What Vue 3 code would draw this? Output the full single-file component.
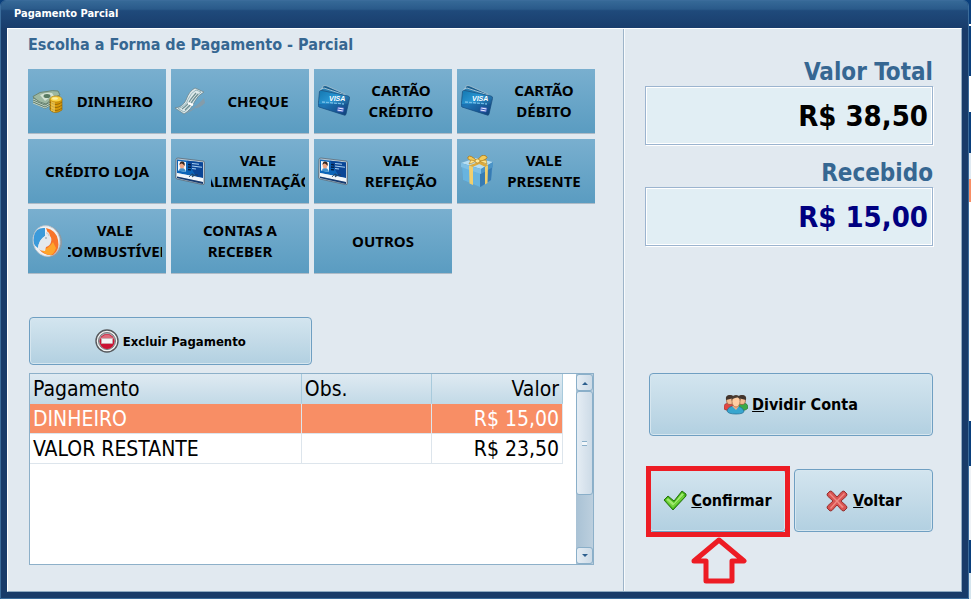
<template>
  <div class="screen">
    <main class="window">
      <header class="title-bar">Pagamento Parcial</header>

      <div class="body">
        <section class="methods">
          <h1 class="heading">Escolha a Forma de Pagamento - Parcial</h1>

          <div class="tiles">
            <button v-for="tile in tiles" :key="tile.lines.join(' ')" type="button" class="tile">
              <svg v-if="tile.icon === 'money'" class="tile-icon" viewBox="0 0 32 32">
                <path d="M1 12v6l12 6 14-8v-6z" fill="#5d7d6b" />
                <path d="M1 14l12 5 14-8M1 16l12 5 14-8M1 18l12 5 14-8" fill="none" stroke="#c3d3c6" />
                <path d="M1 11.500Q8 6 15 6.500 20 5 26 6l2 4q-7 2-14 9Q7 18 1 12z" fill="#9db8a2" stroke="#6b8574" />
                <path d="M8 10q6-3 12-2l2 3q-5 1-9 5z" fill="#d4e2d3" />
                <ellipse cx="15" cy="11" rx="3.500" ry="2" fill="#587a61" />
                <path d="M18 14v11q5 5 12 0V14z" fill="#d99a08" stroke="#9a6a06" stroke-width=".7" />
                <path d="M18 17q6 5 12 0M18 20q6 5 12 0M18 23q6 5 12 0" fill="none" stroke="#9a6a06" />
                <path d="M20 16v10M22 17v10" stroke="#ffe98a" stroke-width="1.200" opacity=".8" />
                <ellipse cx="24" cy="14" rx="6" ry="3" fill="#fbd445" stroke="#b98009" stroke-width=".7" />
                <ellipse cx="23" cy="13.500" rx="3" ry="1.300" fill="#fff0a0" />
              </svg>
              <svg v-else-if="tile.icon === 'check'" class="tile-icon" viewBox="0 0 32 32">
                <path d="M12 27q8-4 17-14l1 5q-6 6-10 5-4 4-8 5z" fill="#8b9aa3" opacity=".8" />
                <path d="M0 23q8-1 11-8Q14 6 20 3l9 4q-6 3-9 9-4 9-11 13z" fill="#dfeaeb" stroke="#6d878e" stroke-width=".8" />
                <path d="M3 23.500q8-2 10-9 3-7 8-9.500l5 2q-5 3-8 9-4 8-9 11z" fill="none" stroke="#789fa8" stroke-width=".7" />
                <path d="M7 24q6-4 9-10l5-6M10 25q5-4 8-10l5-6" fill="none" stroke="#6f8f92" stroke-width="1.200" />
                <path d="M13 18l5 2" stroke="#fff" stroke-width="2" />
              </svg>
              <svg v-else-if="tile.icon === 'card'" class="tile-icon" viewBox="0 0 32 32">
                <path d="M5 1q2-1 4 0l18 8-3 8L2 9z" fill="#1a5f8f" stroke="#aac4d2" stroke-width=".8" />
                <path d="M3 4l3-1 21 7-2 8L1 16z" fill="#2c82b4" stroke="#bdd2dd" stroke-width=".8" />
                <path d="M1.500 6.500Q2 5 4 5.500L30 11q2 .5 1.500 2.500L28 29q-.5 2-2 1L1 22q-1-.5-.8-2z" fill="url(#card-face)" stroke="#1a4d7c" stroke-width=".7" />
                <path d="M0 19q14-1 30 0l-2 10-2 1L1 22z" fill="#0f4c8e" opacity=".45" />
                <path d="M4 17l22 2" stroke="#73bde7" stroke-width="1.300" stroke-dasharray="3 1" />
                <text x="11" y="16" class="brand">VISA</text>
                <path d="M20 22l6 1-1 4-6-1z" fill="#e4ebff" stroke="#3450b5" stroke-width=".7" />
                <path d="M20 24l5 1" stroke="#3450b5" />
                <defs>
                  <linearGradient id="card-face" x1="0" y1="0" x2="1" y2="1">
                    <stop offset="0" stop-color="#1376ae" />
                    <stop offset=".4" stop-color="#2a96d3" />
                    <stop offset="1" stop-color="#123063" />
                  </linearGradient>
                </defs>
              </svg>
              <svg v-else-if="tile.icon === 'badge'" class="tile-icon" viewBox="0 0 32 32">
                <path d="M1 4.500Q1 3 3 3l25 3q1.500 0 1.500 2v20q0 2-2 1.600L2 24q-1.500-.5-1.500-2z" fill="#b8c7d2" stroke="#5c6b78" stroke-width=".8" />
                <path d="M2 4.500l26 3V23L2 18z" fill="#0c64b8" />
                <path d="M12 5.700l16 1.800V23l-7-1.500z" fill="#0a4596" />
                <path d="M2 18l26 5v4L2 21.500z" fill="#f2f6fa" />
                <path d="M2 21.500L28 27v2L2 23z" fill="#153a70" />
                <path d="M3 6l8 1v10l-8-1.500z" fill="#f3f7fb" />
                <path d="M4 16q0-3 3-3t4 4z" fill="#3d8fcc" />
                <ellipse cx="7" cy="10.500" rx="2.300" ry="3" fill="#efa684" />
                <path d="M4.500 10q0-4 3-3.500T9.500 11q-1-2-2.500-2.500T4.500 10z" fill="#33231d" />
                <path d="M13 9.500l3 .3M13 12l3 .3M13 14.500l3 .3" stroke="#061c3f" stroke-width="1.300" />
                <path d="M17 8.500l7 .8M17 11l10 1.200M17 13.500l4 .5" stroke="#a9d0f1" stroke-width="1.100" />
                <path d="M14 22q3-4 4-3t-1 3q3-3 6-2" fill="none" stroke="#26394c" stroke-width=".8" />
              </svg>
              <svg v-else-if="tile.icon === 'gift'" class="tile-icon" viewBox="0 0 32 32">
                <path d="M1 9l15-6 16 4-2 18-10 7L2 25z" fill="#4f93c6" />
                <path d="M1 12l18 5v15L2 25z" fill="#68b4df" />
                <path d="M19 17l12-6-1 14-11 7z" fill="#377bb3" />
                <path d="M0 8l15-5 17 4-12 7z" fill="#b6def2" />
                <path d="M0 8l20 6v5L0 12z" fill="#7fc0e5" />
                <path d="M20 14l12-7v5l-12 7z" fill="#4c94c7" />
                <path d="M8 10.500l4 1.200V30l-3.500-1.500zM24 11.700l3-1.700-.5 18-2.500 1.500z" fill="#f1cf6d" />
                <path d="M8 10.500L23 5l3 .7-14 6zM10 5l3-1 14 6-3 1.700z" fill="#dfaa3b" />
                <path d="M16 6Q9-1 7 2t9 5zM16 6q5-8 9-5t-8 6z" fill="#f3cb5a" stroke="#a87518" stroke-width=".8" />
                <path d="M15 6Q10 9 8 9l2-4zM18 6l8 3-1-4z" fill="#ffe48c" stroke="#b4831d" stroke-width=".6" />
                <ellipse cx="16.500" cy="6" rx="2.500" ry="2" fill="#ffe99c" stroke="#a87518" stroke-width=".6" />
              </svg>
              <svg v-else-if="tile.icon === 'fuel'" class="tile-icon" viewBox="0 0 32 32">
                <ellipse cx="16.500" cy="16.500" rx="13.500" ry="15.500" transform="rotate(-12 16.500 16.500)" fill="#8d9aa3" />
                <ellipse cx="14.500" cy="16" rx="13.500" ry="15.500" transform="rotate(-12 14.500 16)" fill="#eef2f5" stroke="#b9c2c9" stroke-width=".8" />
                <path d="M13 3Q4 2 2 11t4 12Q7 15 13 11z" fill="#3b9ada" />
                <path d="M14 3q10 2 12 12t-5 15q-9 1-14-6 10-3 11-10z" fill="#f8742a" />
                <path d="M9 25q8-1 12-8l3 6q-2 6-5 7-6 0-10-5z" fill="#ffa52b" />
                <path d="M6 24q0-9 7-13l1-4q3-1 4 4 2 2 1 6-1 4-5 5l-1 4q-4 0-7-2z" fill="#e4e9ee" />
                <path d="M14 8q2-1 3 3" fill="none" stroke="#c3ccd4" />
                <circle cx="14" cy="13" r="1" fill="#a5b2bd" />
              </svg>
              <span class="tile-text">
                <span v-for="line in tile.lines" :key="line">{{ line }}</span>
              </span>
            </button>
          </div>

          <div class="payments">
            <button type="button" class="action delete">
              <svg class="action-icon" viewBox="0 0 24 24">
                <circle cx="12" cy="12" r="11" fill="#f4f4f4" stroke="#55585c" stroke-width="1.400" />
                <circle cx="12" cy="12" r="8.500" fill="#a9adb2" stroke="#77797c" />
                <circle cx="12" cy="12.500" r="7.500" fill="#cb1231" />
                <path d="M5 10q7-9 14 0-7 2-14 0z" fill="#dd6b7a" />
                <rect x="6.500" y="9.500" width="11" height="5" fill="#f5f5f5" stroke="#bdb4b5" stroke-width=".6" />
              </svg>
              <span>Excluir Pagamento</span>
            </button>

            <div class="grid-box">
              <div class="grid-area">
                <table class="grid">
                  <thead>
                    <tr>
                      <th scope="col" class="col-name">Pagamento</th>
                      <th scope="col">Obs.</th>
                      <th scope="col" class="col-value">Valor</th>
                    </tr>
                  </thead>
                  <tbody>
                    <tr
                      v-for="(payment, index) in payments"
                      :key="payment.name"
                      :class="{ selected: index === selectedIndex }"
                      @click="selectedIndex = index">
                      <td>{{ payment.name }}</td>
                      <td>{{ payment.note }}</td>
                      <td class="col-value">{{ money(payment.value) }}</td>
                    </tr>
                  </tbody>
                </table>
              </div>
              <div class="scrollbar">
                <button type="button" class="scroll-button" aria-label="Subir">
                  <svg viewBox="0 0 8 4" class="scroll-arrow"><path d="M1 4l3-3 3 3z" fill="#2d5f8e" /></svg>
                </button>
                <div class="scroll-thumb"><span class="grip"></span></div>
                <div class="scroll-track"></div>
                <button type="button" class="scroll-button" aria-label="Descer">
                  <svg viewBox="0 0 8 4" class="scroll-arrow"><path d="M1 0l3 3 3-3z" fill="#2d5f8e" /></svg>
                </button>
              </div>
            </div>
          </div>
        </section>

        <section class="summary">
          <div class="total">
            <label for="valor-total">Valor Total</label>
            <input id="valor-total" type="text" readonly :value="money(total)" />
          </div>
          <div class="total received">
            <label for="recebido">Recebido</label>
            <input id="recebido" type="text" readonly :value="money(received)" />
          </div>

          <div class="actions">
            <button type="button" class="action split">
              <svg class="action-icon" viewBox="0 0 24 24">
                <path d="M0 14q0-4 5-4t6 5l-1 3q-8 0-10-2z" fill="#e04743" stroke="#963331" stroke-width=".6" />
                <path d="M14 15q0-5 5-5t5 5q-2 3-10 3z" fill="#3ba946" stroke="#236d2b" stroke-width=".6" />
                <ellipse cx="6" cy="7" rx="3.500" ry="4.500" fill="#f5bc91" stroke="#8f5634" stroke-width=".7" />
                <ellipse cx="18" cy="7" rx="3.500" ry="4.500" fill="#f5bc91" stroke="#8f5634" stroke-width=".7" />
                <path d="M2 7q-1-5 4-5 4 0 4 3zM22 7q1-5-4-5-4 0-4 3z" fill="#41342d" />
                <path d="M3 18q1-5 8-5t9 5q0 3-8 3t-9-3z" fill="#38a6cf" stroke="#1e6c91" stroke-width=".7" />
                <path d="M8 13l4 4 3-4z" fill="#f2b083" />
                <ellipse cx="12" cy="8.500" rx="4" ry="5.500" fill="#ffcda2" stroke="#a16640" stroke-width=".7" />
                <path d="M7.500 8Q7 2 12 2t4.500 6Q16 5 14 4.500T8.500 6z" fill="#493c32" />
              </svg>
              <span><u>D</u>ividir Conta</span>
            </button>

            <div class="action-row">
              <div class="highlighted">
                <button type="button" class="action">
                  <svg class="action-icon" viewBox="0 0 24 24">
                    <path d="M1 11l4-4 6 5 8-10 4 3v2L10 21z" fill="#45b817" stroke="#28720e" stroke-linejoin="round" />
                    <path d="M3 11l2-2 6 5 8-10 2 1.500L10 17z" fill="#a1e86d" />
                    <path d="M4 12l6 6L21 7" fill="none" stroke="#74d43d" stroke-width="1.500" />
                  </svg>
                  <span><u>C</u>onfirmar</span>
                </button>
                <div class="highlight-box"></div>
                <svg class="highlight-arrow" viewBox="0 0 58 48">
                  <path d="M29 3L54 24H42V44H16V24H4z" fill="none" stroke="#ed1c24" stroke-width="5" stroke-linejoin="round" />
                </svg>
              </div>
              <button type="button" class="action">
                <svg class="action-icon" viewBox="0 0 24 24">
                  <path d="M2 5l3-3 2 .5L12 8l5-5.500L19 2l3 3-.5 2L16 12l5.500 5 .5 2-3 3-2-.5L12 16l-5 5.500L5 22l-3-3 .5-2L8 12 2.500 7z" fill="#d85351" stroke="#96302f" />
                  <path d="M4 5l1-1 7 7 7-7 1 1-7 7 6 6-2 1-5-6-6 7-1-1 6-7z" fill="#f08a83" />
                </svg>
                <span><u>V</u>oltar</span>
              </button>
            </div>
          </div>
        </section>
      </div>
    </main>
    <div class="backdrop"></div>
  </div>
</template>

<script setup>
import { ref } from 'vue'

const tiles = [
  { icon: 'money', lines: ['DINHEIRO'] },
  { icon: 'check', lines: ['CHEQUE'] },
  { icon: 'card', lines: ['CARTÃO', 'CRÉDITO'] },
  { icon: 'card', lines: ['CARTÃO', 'DÉBITO'] },
  { lines: ['CRÉDITO LOJA'] },
  { icon: 'badge', lines: ['VALE', 'ALIMENTAÇÃO'] },
  { icon: 'badge', lines: ['VALE', 'REFEIÇÃO'] },
  { icon: 'gift', lines: ['VALE', 'PRESENTE'] },
  { icon: 'fuel', lines: ['VALE', 'COMBUSTÍVEL'] },
  { lines: ['CONTAS A', 'RECEBER'] },
  { lines: ['OUTROS'] }
]

const total = 38.5
const received = 15

const payments = [
  { name: 'DINHEIRO', note: '', value: received },
  { name: 'VALOR RESTANTE', note: '', value: total - received }
]

const selectedIndex = ref(0)

function money(value) {
  return `R$ ${value.toFixed(2).replace('.', ',')}`
}
</script>

<style>
body {
  margin: 0;
}
</style>

<style scoped>
.screen {
  display: flex;
  min-height: 100vh;
  background: #0a3f7c;
  font-family: Tahoma, 'DejaVu Sans Condensed', 'DejaVu Sans', sans-serif;
  color: #000;
}

.screen * {
  box-sizing: border-box;
}

button,
input {
  font-family: inherit;
  color: inherit;
  margin: 0;
}

.window {
  flex: 1;
  display: flex;
  flex-direction: column;
  padding: 0 6px 6px;
  border: 1px solid #3b6c9b;
  border-radius: 6px 6px 0 0;
  background: #183b69;
}

.title-bar {
  height: 27px;
  margin: 0 -6px;
  padding: 0 13px;
  border-radius: 5px 5px 0 0;
  background: linear-gradient(#366997, #2a5a8a 30%, #1f4a7b 36%, #193d6c);
  color: #fff;
  font-size: 11px;
  font-weight: bold;
  line-height: 26px;
}

.body {
  flex: 1;
  display: flex;
  border: 1px solid #8eaac2;
  border-top-color: #fff;
  border-left-color: #fff;
  background: #e1e9f0;
}

/* Left side */
.methods {
  flex: 1;
  min-width: 0;
  display: flex;
  flex-direction: column;
  padding: 4px 28px 26px 20px;
}

.heading {
  margin: 0 0 12px;
  color: #366792;
  font-size: 16px;
  line-height: 24px;
}

.tiles {
  display: grid;
  grid-template-columns: repeat(4, 1fr);
  gap: 6px 5px;
  margin-bottom: 44px;
}

.tile {
  display: flex;
  align-items: center;
  gap: 4px;
  min-width: 0;
  height: 64px;
  padding: 0 4px;
  border: 0;
  background: linear-gradient(#79afcf, #5a9cc1);
  box-shadow: 0 1px 0 #aebbc7;
  font-family: 'Segoe UI', 'Noto Sans', 'Open Sans', sans-serif;
  font-size: 15px;
  font-weight: bold;
  line-height: 21px;
}

.tile-icon {
  flex: none;
  width: 32px;
  height: 32px;
}

.brand {
  fill: #fff;
  font: italic bold 7px 'Liberation Sans', sans-serif;
}

.tile-text {
  flex: 1;
  min-width: 0;
  display: flex;
  flex-direction: column;
  align-items: center;
  overflow: hidden;
  white-space: nowrap;
}

.action {
  display: flex;
  flex: 1;
  align-items: center;
  justify-content: center;
  gap: 4px;
  width: 100%;
  height: 63px;
  padding: 0;
  border: 1px solid #6f9fc2;
  border-radius: 4px;
  background: linear-gradient(#d3e5ef, #c4dbe8 48%, #b2d0e1);
  box-shadow: inset 0 0 0 1px #d6e6ef;
  font-size: 16px;
  font-weight: bold;
}

.action-icon {
  flex: none;
  width: 24px;
  height: 24px;
}

.payments {
  flex: 1;
  display: flex;
  flex-direction: column;
  padding: 0 1px;
}

.action.delete {
  flex: none;
  width: 50%;
  height: 48px;
  margin-bottom: 8px;
  font-size: 13px;
}

.grid-box {
  flex: 1;
  display: flex;
  min-height: 191px;
  border: 1px solid #8db0c9;
  background: #fff;
}

.grid-area {
  flex: 1;
  padding-right: 13px;
}

.grid {
  width: 100%;
  table-layout: fixed;
  border-collapse: separate;
  border-spacing: 0;
  font-size: 21px;
}

.grid th,
.grid td {
  height: 30px;
  padding: 0 3px;
  border-right: 1px solid #dde5ec;
  border-bottom: 1px solid #dde5ec;
  font-weight: normal;
  line-height: 28px;
  text-align: left;
}

.grid th {
  border-right-color: #a8cadc;
  border-bottom-color: #c3d9e6;
  background: linear-gradient(#dfeaf2, #c3dae7);
}

.grid .col-name {
  width: 51%;
}

.grid .col-value {
  text-align: right;
}

.grid .selected td {
  background: #f88e65;
  color: #fff;
}

.scrollbar {
  display: flex;
  flex-direction: column;
  width: 17px;
  background: linear-gradient(90deg, #a9c2d5, #bccfde);
}

.scroll-button,
.scroll-thumb {
  display: flex;
  align-items: center;
  justify-content: center;
  border: 1px solid #8aafc9;
  border-radius: 3px;
  background: linear-gradient(90deg, #e5edf4, #cddbe7);
}

.scroll-button {
  height: 17px;
  padding: 0;
}

.scroll-arrow {
  width: 8px;
  height: 4px;
}

.scroll-thumb {
  flex: 103;
}

.scroll-track {
  flex: 52;
}

.grip {
  width: 5px;
  height: 5px;
  border: solid #8aafc9;
  border-width: 1px 0;
  background: #f2f6f9;
}

/* Right side */
.summary {
  display: flex;
  flex-direction: column;
  flex: none;
  width: 338px;
  padding: 29px 28px 59px 21px;
  border-left: 1px solid #9db4c9;
  box-shadow: inset 1px 0 0 #f7fafc;
}

.total {
  display: flex;
  flex-direction: column;
}

.received {
  margin-top: 14px;
}

.total label {
  color: #366792;
  font-size: 24px;
  font-weight: bold;
  line-height: 28px;
  text-align: right;
}

.total input {
  width: 100%;
  height: 59px;
  padding: 0 4px;
  border: 1px solid #9bb4cf;
  border-radius: 0;
  outline: 0;
  background: #e1eef4;
  box-shadow: inset 0 0 0 1px #fff, 1px 1px 0 #fff;
  font-size: 29px;
  font-weight: bold;
  text-align: right;
}

.received input {
  color: #000080;
}

.actions {
  margin-top: auto;
  padding-left: 4px;
}

.split {
  margin-bottom: 33px;
}

.action-row {
  display: flex;
  gap: 8px;
}

.action-row > * {
  flex: 1;
}

.highlighted {
  position: relative;
}

.highlight-box {
  position: absolute;
  inset: -3px -4px -5px -3px;
  border: 5px solid #ed1c24;
  pointer-events: none;
}

.highlight-arrow {
  position: absolute;
  top: 100%;
  left: 50%;
  width: 58px;
  height: 48px;
  margin: 5px 0 0 -28px;
}

/* Edge of the sales screen behind the dialog */
.backdrop {
  width: 2px;
  background: linear-gradient(
    #0a3f7c 24px, #fff 24px 26px,
    #0a3f7c 26px 76px, #fff 76px 112px,
    #0a3f7c 112px 153px, #dfe9f1 153px 179px,
    #f88e65 179px 202px, #fff 202px 421px,
    #0a3f7c 421px 466px, #eef2f6 466px 540px,
    #0a3f7c 540px 573px, #d5e5ee 573px
  );
}
</style>
